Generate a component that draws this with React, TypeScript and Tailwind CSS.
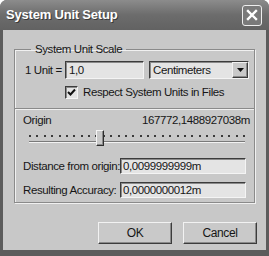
import React from "react";

const font = { fontFamily: "'Liberation Sans', Arial, sans-serif" };

const sunken =
  "border border-t-[#3c3c3c] border-l-[#3c3c3c] border-b-[#f4f4f4] border-r-[#f4f4f4] shadow-[inset_1px_1px_0_#8a8a8a] bg-[#e4e4e4]";
const raised =
  "border border-t-[#f2f2f2] border-l-[#f2f2f2] border-b-[#3c3c3c] border-r-[#3c3c3c] shadow-[inset_-1px_-1px_0_#8a8a8a] bg-[#c9c9c9]";

function Slider() {
  const dots = Array.from({ length: 30 });
  return (
    <div className="relative h-[18px] ml-[6px] mr-[5px] mt-[2px]">
      <div className="flex justify-between pt-[6px]">
        {dots.map((_, i) => (
          <span key={i} className="w-[2px] h-[2px] bg-[#3a3a3a]" />
        ))}
      </div>
      <div className="mt-[4px] h-[2px] border-t border-t-[#7a7a7a] border-b border-b-[#f2f2f2]" />
      <div className="absolute left-[67px] top-[1px] w-[8px] h-[16px] bg-[#c9c9c9] border border-t-[#f4f4f4] border-l-[#f4f4f4] border-b-[#2e2e2e] border-r-[#2e2e2e] shadow-[inset_-1px_-1px_0_#8a8a8a]" />
    </div>
  );
}

export default function App() {
  return (
    <div
      className="w-[269px] h-[256px] bg-[#5c5c5c] rounded-t-[7px] flex flex-col overflow-hidden text-[11.5px] tracking-[-0.4px] leading-[14px] whitespace-nowrap text-[#161616]"
      style={font}
    >
      {/* Title bar */}
      <div className="h-[30px] shrink-0 flex items-center justify-between pl-[6px] pr-[7px] bg-gradient-to-b from-[#8c8c8c] via-[#6c6c6c] to-[#626262]">
        <span className="text-white font-bold text-[13px] tracking-[-0.2px] [text-shadow:1px_1px_0_#3a3a3a]">
          System Unit Setup
        </span>
        <button className="w-[20px] h-[21px] rounded-[3px] border border-[#eeeeee] bg-[#7a7a7a] flex items-center justify-center">
          <svg width="12" height="12" viewBox="0 0 12 12">
            <path d="M2 2 L10 10 M10 2 L2 10" stroke="#ffffff" strokeWidth="2.4" strokeLinecap="square" />
          </svg>
        </button>
      </div>

      {/* Body */}
      <div className="flex-1 mx-[3px] mb-[6px] bg-[#c8c8c8] flex flex-col">
        <fieldset className="mt-[13px] ml-[11px] w-[241px] h-[160px] border border-[#8a8a8a] shadow-[inset_1px_1px_0_#f0f0f0,1px_1px_0_#f0f0f0] pl-[8px] pr-[4px]">
          <legend className="ml-[8px] px-[4px] leading-[13px]">System Unit Scale</legend>

          <div className="flex items-center mt-[5px] ml-[2px]">
            <span className="w-[40px]">1 Unit =</span>
            <div className={`${sunken} w-[79px] h-[18px] flex items-center pl-[3px]`}>1,0</div>
            <div className={`${sunken} ml-[5px] w-[100px] h-[18px] flex items-center justify-between pl-[3px]`}>
              <span>Centimeters</span>
              <div className={`${raised} w-[16px] h-[16px] flex items-center justify-center`}>
                <svg width="7" height="4" viewBox="0 0 7 4">
                  <path d="M0 0 H7 L3.5 4 Z" fill="#111111" />
                </svg>
              </div>
            </div>
          </div>

          <div className="flex items-center mt-[6px] ml-[42px]">
            <div className={`${sunken} w-[13px] h-[13px] flex items-center justify-center`}>
              <svg width="9" height="9" viewBox="0 0 9 9">
                <path d="M1 4 L3.5 6.5 L8 1.5" stroke="#111111" strokeWidth="2" fill="none" />
              </svg>
            </div>
            <span className="ml-[5px]">Respect System Units in Files</span>
          </div>

          <div className="-ml-[8px] -mr-[4px] mt-[9px] border-t border-t-[#8a8a8a] border-b border-b-[#f0f0f0]" />

          <div className="flex items-center justify-between mt-[3px]">
            <span>Origin</span>
            <span>167772,1488927038m</span>
          </div>

          <Slider />

          <div className="flex items-center mt-[11px]">
            <span className="w-[97px]">Distance from origin:</span>
            <div className={`${sunken} w-[126px] h-[16px] flex items-center pl-[2px]`}>0,0099999999m</div>
          </div>
          <div className="flex items-center mt-[8px]">
            <span className="w-[97px]">Resulting Accuracy:</span>
            <div className={`${sunken} w-[126px] h-[16px] flex items-center pl-[2px]`}>0,0000000012m</div>
          </div>
        </fieldset>

        <div className="flex justify-end gap-[11px] pr-[9px] mt-[19px]">
          <button className={`${raised} w-[74px] h-[22px] text-[12px]`}>OK</button>
          <button className={`${raised} w-[74px] h-[22px] text-[12px]`}>Cancel</button>
        </div>
      </div>
    </div>
  );
}
